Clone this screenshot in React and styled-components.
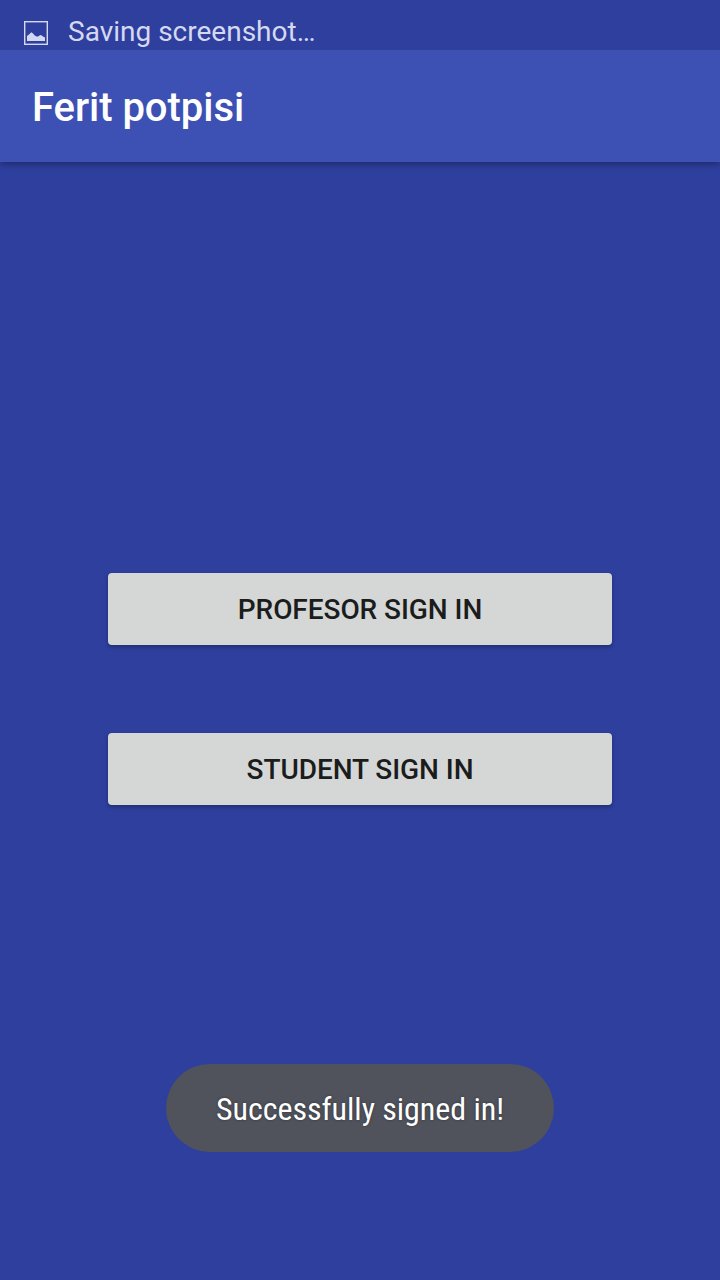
import React from "react";
import styled, { createGlobalStyle } from "styled-components";

const GlobalStyle = createGlobalStyle`
  body { margin: 0; background: #2e3f9e; font-family: Roboto, "Liberation Sans", sans-serif; }
`;

const Screen = styled.div`
  position: relative;
  display: flex;
  flex-direction: column;
  width: 720px;
  height: 1280px;
  overflow: hidden;
  background: #2e3f9e;
`;

const StatusBar = styled.div`
  box-sizing: border-box;
  display: flex;
  align-items: center;
  gap: 20px;
  height: 50px;
  padding: 15px 24px 0;
  color: #d5d9f0;
  font-size: 28px;
  line-height: 35px;
  white-space: nowrap;
`;

const StatusText = styled.span`
  padding-bottom: 2px;
`;

const AppBar = styled.header`
  display: flex;
  align-items: center;
  height: 112px;
  padding: 4px 32px 0;
  box-sizing: border-box;
  background: #3d51b4;
  box-shadow: 0 2px 7px rgba(0, 0, 0, 0.36);
  clip-path: inset(0 0 -12px 0);
`;

const Title = styled.h1`
  margin: 0;
  color: #fff;
  font-size: 40px;
  font-weight: 500;
  line-height: 48px;
  letter-spacing: -0.04px;
  white-space: nowrap;
`;

const Actions = styled.main`
  display: flex;
  flex-direction: column;
  align-items: center;
  gap: 88px;
  padding-top: 411px;
`;

const SignInButton = styled.button`
  width: 504px;
  height: 72px;
  padding: 2px 0 0;
  border: 0;
  border-radius: 4px;
  background: #d5d7d6;
  box-shadow: 0 2px 4px rgba(0, 0, 0, 0.3);
  color: #1b1c1c;
  font: 500 28px/34px Roboto, "Liberation Sans", sans-serif;
  letter-spacing: -0.06px;
  white-space: nowrap;
`;

const Toast = styled.div`
  position: absolute;
  left: 166px;
  top: 1064px;
  display: flex;
  align-items: center;
  justify-content: center;
  box-sizing: border-box;
  width: 388px;
  height: 88px;
  padding-top: 2px;
  border-radius: 44px;
  background: #50535c;
`;

const ToastText = styled.span`
  color: #fff;
  font-family: "Roboto Condensed", Roboto, "Liberation Sans", sans-serif;
  font-size: 32px;
  font-stretch: 75%;
  line-height: 38px;
  letter-spacing: -0.04px;
  white-space: nowrap;
  text-shadow: 0 0 3px rgba(0, 0, 0, 0.4);
`;

const PictureIcon = () => (
  <svg width="24" height="24" viewBox="0 0 24 24" fill="none">
    <rect x="0.7" y="0.7" width="22.6" height="22.6" stroke="#d5d9f0" strokeWidth="1.4" />
    <path d="M3 20v-5l2-1.5 1-1 1.5-1.2 1.5 1.2 2 2.3 2.5 1 2-1.3 1.5-.5 2 1.5 2 1v3.5z" fill="#d5d9f0" />
  </svg>
);

export default function App() {
  return (
    <Screen>
      <GlobalStyle />
      <StatusBar>
        <PictureIcon />
        <StatusText>Saving screenshot…</StatusText>
      </StatusBar>
      <AppBar>
        <Title>Ferit potpisi</Title>
      </AppBar>
      <Actions>
        <SignInButton>PROFESOR SIGN IN</SignInButton>
        <SignInButton>STUDENT SIGN IN</SignInButton>
      </Actions>
      <Toast>
        <ToastText>Successfully signed in!</ToastText>
      </Toast>
    </Screen>
  );
}
